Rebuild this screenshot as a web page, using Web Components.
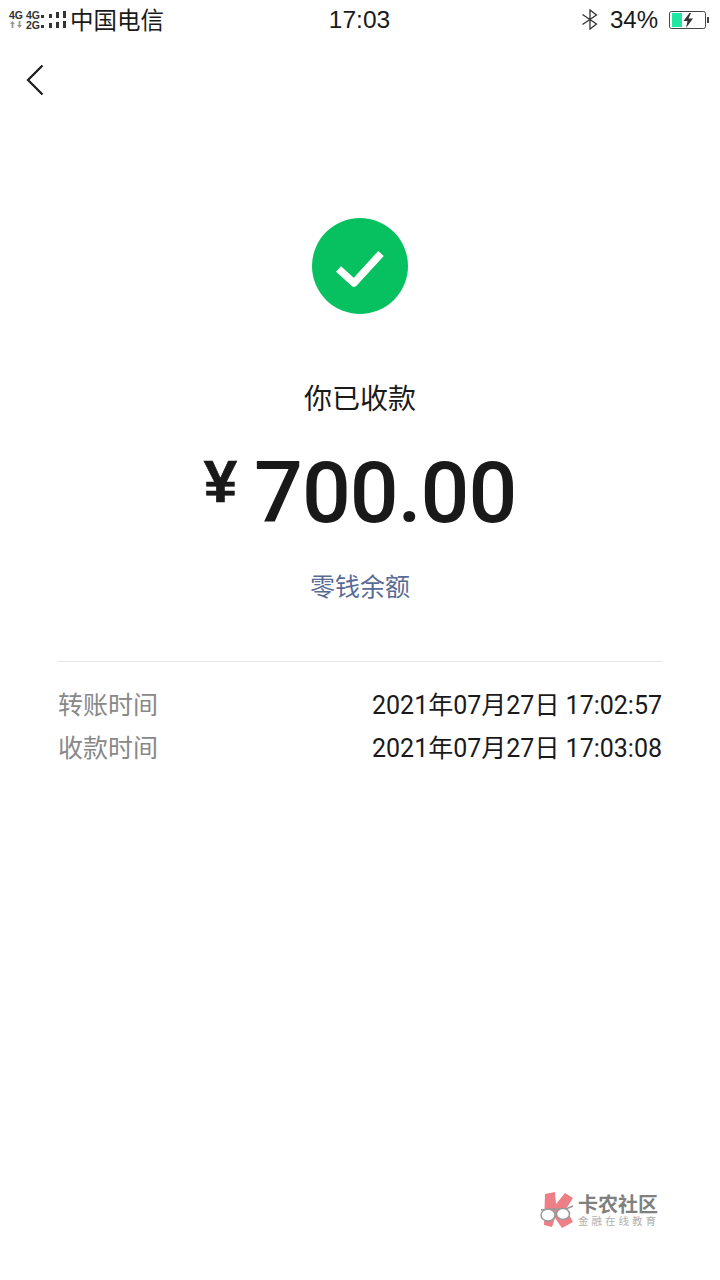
<!DOCTYPE html>
<html>
<head>
<meta charset="utf-8">
<style>
  html, body { margin: 0; background: #fff; }
  body { width: 720px; height: 1280px; overflow: hidden; font-family: Roboto, "Noto Sans CJK SC", sans-serif; color: #191919; }
</style>
</head>
<body>
<pay-page>
  <status-bar></status-bar>
  <back-bar></back-bar>
  <pay-result title-text="你已收款" amount="700.00" link="零钱余额"></pay-result>
  <pay-details>
    <detail-row label="转账时间" value="2021年07月27日 17:02:57"></detail-row>
    <detail-row label="收款时间" value="2021年07月27日 17:03:08"></detail-row>
  </pay-details>
  <water-mark></water-mark>
</pay-page>

<script>
class PayPage extends HTMLElement {
    constructor() {
        super();
        this.attachShadow({ mode: 'open' });
        this.shadowRoot.innerHTML = `
        <style>
            :host { display: flex; flex-direction: column; width: 720px; height: 1280px; position: relative; }
        </style>
        <slot></slot>
        `;
    }
}
customElements.define('pay-page', PayPage);

class StatusBar extends HTMLElement {
    constructor() {
        super();
        this.attachShadow({ mode: 'open' });
        this.shadowRoot.innerHTML = `
        <style>
            :host { display: grid; grid-template-columns: 1fr auto 1fr; align-items: center; height: 39px; padding: 0 11px 0 9px; font-family: "Liberation Sans", "Noto Sans CJK SC", sans-serif; color: #1a1a1a; }
            .left, .right { display: flex; align-items: center; }
            .right { justify-content: flex-end; }
            .net { display: grid; grid-template-columns: 14px 14px; column-gap: 3px; font-size: 10.5px; font-weight: 700; line-height: 10px; color: #333; letter-spacing: -0.2px; }
            .bars { margin: 0 6px 0 1px; }
            .carrier { font-size: 23.5px; line-height: 39px; font-family: "Noto Sans CJK SC", sans-serif; margin-left: -2px; }
            .clock { font-size: 24.5px; line-height: 39px; padding-left: 1px; }
            .pct { font-size: 24px; margin: 0 11px; }
            svg { display: block; }
        </style>
        <div class="left">
            <div class="net">
                <span>4G</span><span>4G</span>
                <svg width="14" height="9" viewBox="0 0 14 9"><path d="M3.500 1 1 4h1.600v4h1.800V4H6zM10.500 8 8 5h1.600V1h1.800v4H13z" fill="#999"/></svg>
                <span>2G</span>
            </div>
            <svg class="bars" width="25" height="18" viewBox="0 0 25 18" fill="#333">
                <rect x="0" y="4" width="3" height="3"/><rect x="0" y="14" width="3" height="3"/>
                <rect x="8" y="3" width="3" height="4"/><rect x="8" y="12" width="3" height="5"/>
                <rect x="15" y="1" width="3" height="6"/><rect x="15" y="11" width="3" height="6"/>
                <rect x="22" y="0" width="3" height="7"/><rect x="22" y="10" width="3" height="7"/>
            </svg>
            <span class="carrier">中国电信</span>
        </div>
        <span class="clock">17:03</span>
        <div class="right">
            <svg width="18" height="21" viewBox="0 0 18 21" fill="none" stroke="#333" stroke-width="1.300"><path d="M1.500 5.500 15.500 15 9 20V1l6.500 5L1.500 15.500"/></svg>
            <span class="pct">34%</span>
            <svg width="40" height="18" viewBox="0 0 40 18">
                <rect x=".5" y=".5" width="36" height="17" rx="2" fill="#fff" stroke="#444"/>
                <rect x="3" y="2" width="10" height="14" fill="#1fe6a0"/>
                <path d="M20.500 2 14.500 10h4l-1.500 7 7-9.500h-4.500L22 2z" fill="#333"/>
                <rect x="38" y="6" width="2" height="6" fill="#444"/>
            </svg>
        </div>
        `;
    }
}
customElements.define('status-bar', StatusBar);

class BackBar extends HTMLElement {
    constructor() {
        super();
        this.attachShadow({ mode: 'open' });
        this.shadowRoot.innerHTML = `
        <style>
            :host { display: block; height: 179px; padding: 25px 0 0 26px; box-sizing: border-box; }
            svg { display: block; }
        </style>
        <svg width="18" height="32" viewBox="0 0 18 32" fill="none" stroke="#1a1a1a" stroke-width="2.200"><path d="M16.500 1.500 2 16l14.500 14.500"/></svg>
        `;
    }
}
customElements.define('back-bar', BackBar);

class PayResult extends HTMLElement {
    constructor() {
        super();
        this.attachShadow({ mode: 'open' });
        this.shadowRoot.innerHTML = `
        <style>
            :host { display: flex; flex-direction: column; align-items: center; font-family: "Noto Sans CJK SC", sans-serif; }
            svg { display: block; }
            .title { margin-top: 62px; font-size: 28px; line-height: 42px; color: #1a1a1a; }
            .amount { display: flex; align-items: flex-start; height: 100px; margin-top: 25px; color: #191919; font-family: Roboto, sans-serif; }
            .yen { font-size: 60px; font-weight: 700; line-height: 54px; margin-top: 12px; margin-right: 17px; font-family: "Liberation Sans", sans-serif; -webkit-text-stroke: 0.7px #191919; }
            .num { font-size: 86px; font-weight: 500; line-height: 100px; letter-spacing: -1px; }
            .link { margin-top: 23px; font-size: 25px; line-height: 38px; color: #576b95; }
        </style>
        <svg width="96" height="96" viewBox="0 0 96 96">
            <circle cx="48" cy="48" r="48" fill="#07c160"/>
            <path d="M26.500 51 42 65 69 35.500" fill="none" stroke="#fff" stroke-width="7.500" stroke-linejoin="round"/>
        </svg>
        <div class="title">${this.getAttribute('title-text')}</div>
        <div class="amount"><span class="yen">¥</span><span class="num">${this.getAttribute('amount')}</span></div>
        <div class="link">${this.getAttribute('link')}</div>
        `;
    }
}
customElements.define('pay-result', PayResult);

class PayDetails extends HTMLElement {
    constructor() {
        super();
        this.attachShadow({ mode: 'open' });
        this.shadowRoot.innerHTML = `
        <style>
            :host { display: block; margin: 57px 58px 0; padding-top: 19px; border-top: 1px solid #e5e5e5; }
        </style>
        <slot></slot>
        `;
    }
}
customElements.define('pay-details', PayDetails);

class DetailRow extends HTMLElement {
    constructor() {
        super();
        this.attachShadow({ mode: 'open' });
        this.shadowRoot.innerHTML = `
        <style>
            :host { display: flex; justify-content: space-between; align-items: center; height: 43px; font-size: 25px; font-family: Roboto, "Noto Sans CJK SC", sans-serif; }
            .label { color: #888; font-family: "Noto Sans CJK SC", sans-serif; }
            .value { color: #1a1a1a; }
        </style>
        <span class="label">${this.getAttribute('label')}</span>
        <span class="value">${this.getAttribute('value')}</span>
        `;
    }
}
customElements.define('detail-row', DetailRow);

class WaterMark extends HTMLElement {
    constructor() {
        super();
        this.attachShadow({ mode: 'open' });
        this.shadowRoot.innerHTML = `
        <style>
            :host { position: absolute; left: 540px; top: 1192px; display: flex; align-items: center; gap: 4px; font-family: "Noto Sans CJK SC", sans-serif; }
            svg { display: block; }
            .name { font-size: 20px; line-height: 22px; font-weight: 700; color: #808080; }
            .sub { font-size: 10.500px; line-height: 12px; color: #b0b0b0; letter-spacing: 3px; white-space: nowrap; }
        </style>
        <svg width="34" height="36" viewBox="0 0 34 36">
            <path d="M5 2 15 0 16 12 25 1 33 6 26 17 33 30 22 36 15 26 12 35 4 33z" fill="#ee7f86"/>
            <path d="M1 18 15 17 26 17 33 14" fill="none" stroke="#999" stroke-width="1.500"/>
            <ellipse cx="8" cy="23" rx="7" ry="6" fill="#fff" stroke="#999" stroke-width="1.500"/>
            <ellipse cx="23" cy="22" rx="6.500" ry="5.500" fill="#fff" stroke="#999" stroke-width="1.500"/>
        </svg>
        <div>
            <div class="name">卡农社区</div>
            <div class="sub">金融在线教育</div>
        </div>
        `;
    }
}
customElements.define('water-mark', WaterMark);
</script>
</body>
</html>
